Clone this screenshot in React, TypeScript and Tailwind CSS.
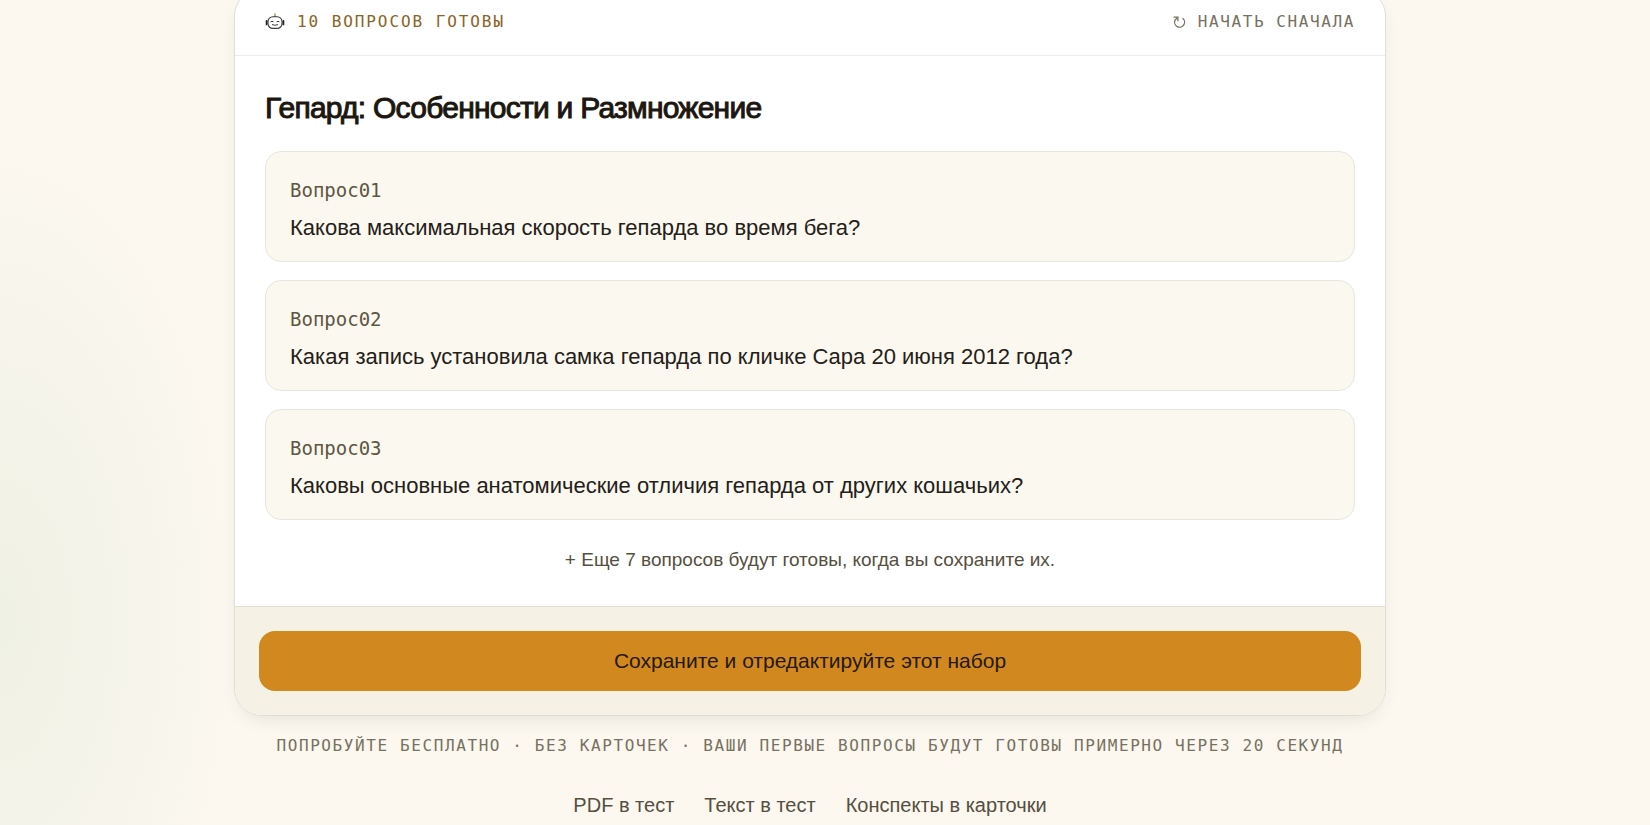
const questions = [
  { id: "01", text: "Какова максимальная скорость гепарда во время бега?" },
  { id: "02", text: "Какая запись установила самка гепарда по кличке Сара 20 июня 2012 года?" },
  { id: "03", text: "Каковы основные анатомические отличия гепарда от других кошачьих?" },
];

const links = ["PDF в тест", "Текст в тест", "Конспекты в карточки"];

function RobotIcon() {
  return (
    <svg viewBox="0 0 20 18" className="h-[18px] w-5" fill="none" aria-hidden="true">
      <path d="M10 4V.6" stroke="#a58a55" strokeWidth="1.4" />
      <rect x="3" y="3.8" width="14" height="11.6" rx="4.8" stroke="#3a3a38" strokeWidth="1.1" />
      <path d="M1.6 7.8v3.6M18.4 7.8v3.6" stroke="#222" strokeWidth="1.8" strokeLinecap="round" />
      <path d="M5.9 8.6q1.1-.9 2.2 0M11.9 8.6q1.1-.9 2.2 0M7.4 11.7q2.6 1.4 5.2 0" stroke="#3a3a38" strokeWidth="1" strokeLinecap="round" />
    </svg>
  );
}

function RestartIcon() {
  return (
    <svg viewBox="0 0 13 13" className="size-[13px]" fill="none" stroke="#77715f" strokeWidth="1.3" aria-hidden="true">
      <path d="M9.6 2.2A5 5 0 1 1 2 4.2L4.6 1.4" />
      <path d="M.6 1.2h4.3v4" />
    </svg>
  );
}

export default function App() {
  return (
    <div className="min-h-screen overflow-hidden bg-[#fcf8f0] bg-[radial-gradient(ellipse_240px_480px_at_0px_620px,#f0f1e5_0%,#f4f3e9_45%,#fcf8f000_100%)] pr-[30px] font-['Liberation_Sans',Arial,sans-serif] text-[#1c1710]">
      <main className="mx-auto -mt-3 flex max-w-[1152px] flex-col">
        <section className="overflow-hidden rounded-[28px] border border-[#dfdfd9] bg-white shadow-[0_8px_20px_-8px_rgba(60,50,20,0.14)]">
          <header className="flex items-center justify-between border-b border-[#ececea] px-[30px] py-5 font-['DejaVu_Sans_Mono',monospace] text-base leading-[26px] uppercase">
            <p className="flex items-center gap-3 tracking-[0.12em] text-[#8a6426]">
              <RobotIcon />
              10 вопросов готовы
            </p>
            <button type="button" className="flex items-center gap-3 tracking-widest text-[#77715f] uppercase">
              <RestartIcon />
              Начать сначала
            </button>
          </header>

          <div className="px-[30px] pt-8 pb-[30px]">
            <h1 className="text-3xl leading-10 font-normal tracking-tight [-webkit-text-stroke:1px_currentColor]">
              Гепард: Особенности и Размножение
            </h1>
            <ol className="mt-[23px] flex flex-col gap-[18px]">
              {questions.map((q) => (
                <li key={q.id} className="rounded-2xl border border-[#e6e6de] bg-[#fbf8ef] px-6 pt-6 pb-4">
                  <p className="font-['DejaVu_Sans_Mono',monospace] text-[19px] leading-7 text-[#5e5643]">Вопрос{q.id}</p>
                  <p className="mt-1.5 text-[22px] leading-[35px] text-[#242018]">{q.text}</p>
                </li>
              ))}
            </ol>
            <p className="mt-6 text-center text-[19px] leading-8 text-[#554f40]">
              + Еще 7 вопросов будут готовы, когда вы сохраните их.
            </p>
          </div>

          <footer className="border-t border-[#e3e2d2] bg-[#f5f1e4] p-6">
            <button type="button" className="h-[60px] w-full rounded-2xl bg-[#d1891f] text-[21px] text-[#25180a]">
              Сохраните и отредактируйте этот набор
            </button>
          </footer>
        </section>

        <p className="mt-4 text-center font-['DejaVu_Sans_Mono',monospace] text-base leading-7 tracking-widest text-[#77715f] uppercase">
          Попробуйте бесплатно · Без карточек · Ваши первые вопросы будут готовы примерно через 20 секунд
        </p>
        <nav className="mt-[31px] flex justify-center gap-[30px] text-xl leading-7 text-[#554f40]">
          {links.map((label) => (
            <a key={label} href="#">{label}</a>
          ))}
        </nav>
      </main>
    </div>
  );
}
